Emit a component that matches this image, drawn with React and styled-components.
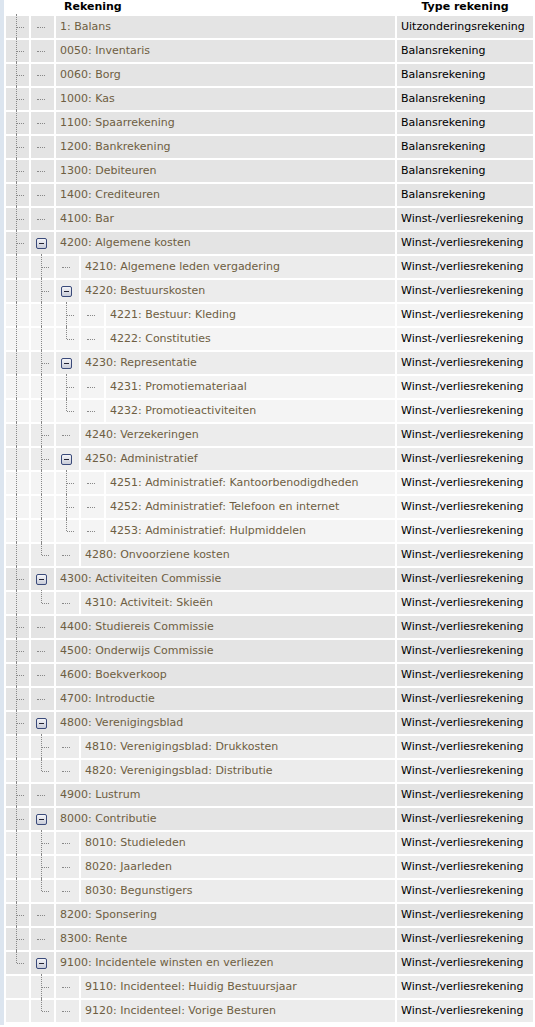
import React from 'react'
import styled, { createGlobalStyle } from 'styled-components'

const Global = createGlobalStyle`
  body { margin: 0; background: #fff; font-family: "DejaVu Sans", Verdana, sans-serif; font-size: 11px; }
`

const B = 'Balansrekening'
const W = 'Winst-/verliesrekening'

// [depth, name, type]
const raw = [
  [1, '1: Balans', 'Uitzonderingsrekening'],
  [1, '0050: Inventaris', B],
  [1, '0060: Borg', B],
  [1, '1000: Kas', B],
  [1, '1100: Spaarrekening', B],
  [1, '1200: Bankrekening', B],
  [1, '1300: Debiteuren', B],
  [1, '1400: Crediteuren', B],
  [1, '4100: Bar', W],
  [1, '4200: Algemene kosten', W],
  [2, '4210: Algemene leden vergadering', W],
  [2, '4220: Bestuurskosten', W],
  [3, '4221: Bestuur: Kleding', W],
  [3, '4222: Constituties', W],
  [2, '4230: Representatie', W],
  [3, '4231: Promotiemateriaal', W],
  [3, '4232: Promotieactiviteiten', W],
  [2, '4240: Verzekeringen', W],
  [2, '4250: Administratief', W],
  [3, '4251: Administratief: Kantoorbenodigdheden', W],
  [3, '4252: Administratief: Telefoon en internet', W],
  [3, '4253: Administratief: Hulpmiddelen', W],
  [2, '4280: Onvoorziene kosten', W],
  [1, '4300: Activiteiten Commissie', W],
  [2, '4310: Activiteit: Skieën', W],
  [1, '4400: Studiereis Commissie', W],
  [1, '4500: Onderwijs Commissie', W],
  [1, '4600: Boekverkoop', W],
  [1, '4700: Introductie', W],
  [1, '4800: Verenigingsblad', W],
  [2, '4810: Verenigingsblad: Drukkosten', W],
  [2, '4820: Verenigingsblad: Distributie', W],
  [1, '4900: Lustrum', W],
  [1, '8000: Contributie', W],
  [2, '8010: Studieleden', W],
  [2, '8020: Jaarleden', W],
  [2, '8030: Begunstigers', W],
  [1, '8200: Sponsering', W],
  [1, '8300: Rente', W],
  [1, '9100: Incidentele winsten en verliezen', W],
  [2, '9110: Incidenteel: Huidig Bestuursjaar', W],
  [2, '9120: Incidenteel: Vorige Besturen', W],
]

const isLastAt = (i) => {
  const d = raw[i][0]
  for (let j = i + 1; j < raw.length; j++) {
    if (raw[j][0] < d) return true
    if (raw[j][0] === d) return false
  }
  return true
}

const rows = raw.map(([depth, name, type], i) => {
  const hasKids = i + 1 < raw.length && raw[i + 1][0] > depth
  // for ancestor levels: does a line continue?
  const cont = []
  let lvl = depth - 1
  for (let j = i - 1; j >= 0 && lvl >= 1; j--) {
    if (raw[j][0] === lvl) {
      cont.unshift(!isLastAt(j))
      lvl--
    }
  }
  return { depth, name, type, hasKids, last: isLastAt(i), cont }
})

const bgs = { 1: '#e4e4e4', 2: '#ececec', 3: '#f4f4f4' }

const Page = styled.div`
  border-left: 4px solid #dce5ef;
  min-height: 1027px;
`
const Table = styled.table`
  border-spacing: 2px;
  width: 531px;
  margin-top: -2px;
`
const Th = styled.th`
  font-weight: bold;
  color: #000;
  height: 14px;
  line-height: 14px;
  padding: 0 0 0 ${(p) => p.$pl || 0}px;
  text-align: ${(p) => p.$align || 'left'};
`
const Cell = styled.td`
  background: ${(p) => p.$bg};
  height: 22px;
  line-height: 14px;
  padding: 0;
`
const TreeCell = styled(Cell)`
  width: 23px;
  position: relative;
  &::before {
    content: '';
    display: ${(p) => (p.$v ? 'block' : 'none')};
    position: absolute;
    left: 10px;
    top: -2px;
    height: ${(p) => (p.$v === 'half' ? '13px' : '26px')};
    border-left: 1px dotted #888;
  }
  &::after {
    content: '';
    display: ${(p) => (p.$h ? 'block' : 'none')};
    position: absolute;
    left: ${(p) => (p.$v ? 11 : 6)}px;
    top: 11px;
    width: ${(p) => (p.$v ? 7 : 8)}px;
    border-top: 1px dotted #888;
  }
`
const Minus = styled.span`
  display: block;
  margin-left: 5px;
  width: 9px;
  height: 9px;
  border: 1px solid #3a4a7a;
  border-radius: 2px;
  background: linear-gradient(#f4f4f8, #c8ccd8);
  position: relative;
  &::after {
    content: '';
    position: absolute;
    left: 2px;
    top: 4px;
    width: 5px;
    height: 1px;
    background: #223;
  }
`
const NameCell = styled(Cell)`
  color: #6e5e42;
  padding-left: 4px;
  white-space: nowrap;
`
const TypeCell = styled(Cell)`
  color: #000;
  padding-left: 4px;
  width: 132px;
  white-space: nowrap;
`

export default function App() {
  return (
    <Page>
      <Global />
      <Table>
        <thead>
          <tr>
            <Th colSpan={6} $pl={58}>Rekening</Th>
            <Th $align="center">Type rekening</Th>
          </tr>
        </thead>
        <tbody>
          {rows.map((r, i) => {
            const bg = bgs[r.depth]
            const cells = []
            r.cont.forEach((c, k) => cells.push(<TreeCell key={'a' + k} $bg={bg} $v={c ? 'full' : null} />))
            cells.push(<TreeCell key="c" $bg={bg} $v={r.last ? 'half' : 'full'} $h />)
            cells.push(
              r.hasKids
                ? <TreeCell key="i" $bg={bg}><Minus /></TreeCell>
                : <TreeCell key="i" $bg={bg} $h />
            )
            return (
              <tr key={i}>
                {cells}
                <NameCell colSpan={6 - r.depth - 1} $bg={bg}>{r.name}</NameCell>
                <TypeCell $bg={bg}>{r.type}</TypeCell>
              </tr>
            )
          })}
        </tbody>
      </Table>
    </Page>
  )
}
